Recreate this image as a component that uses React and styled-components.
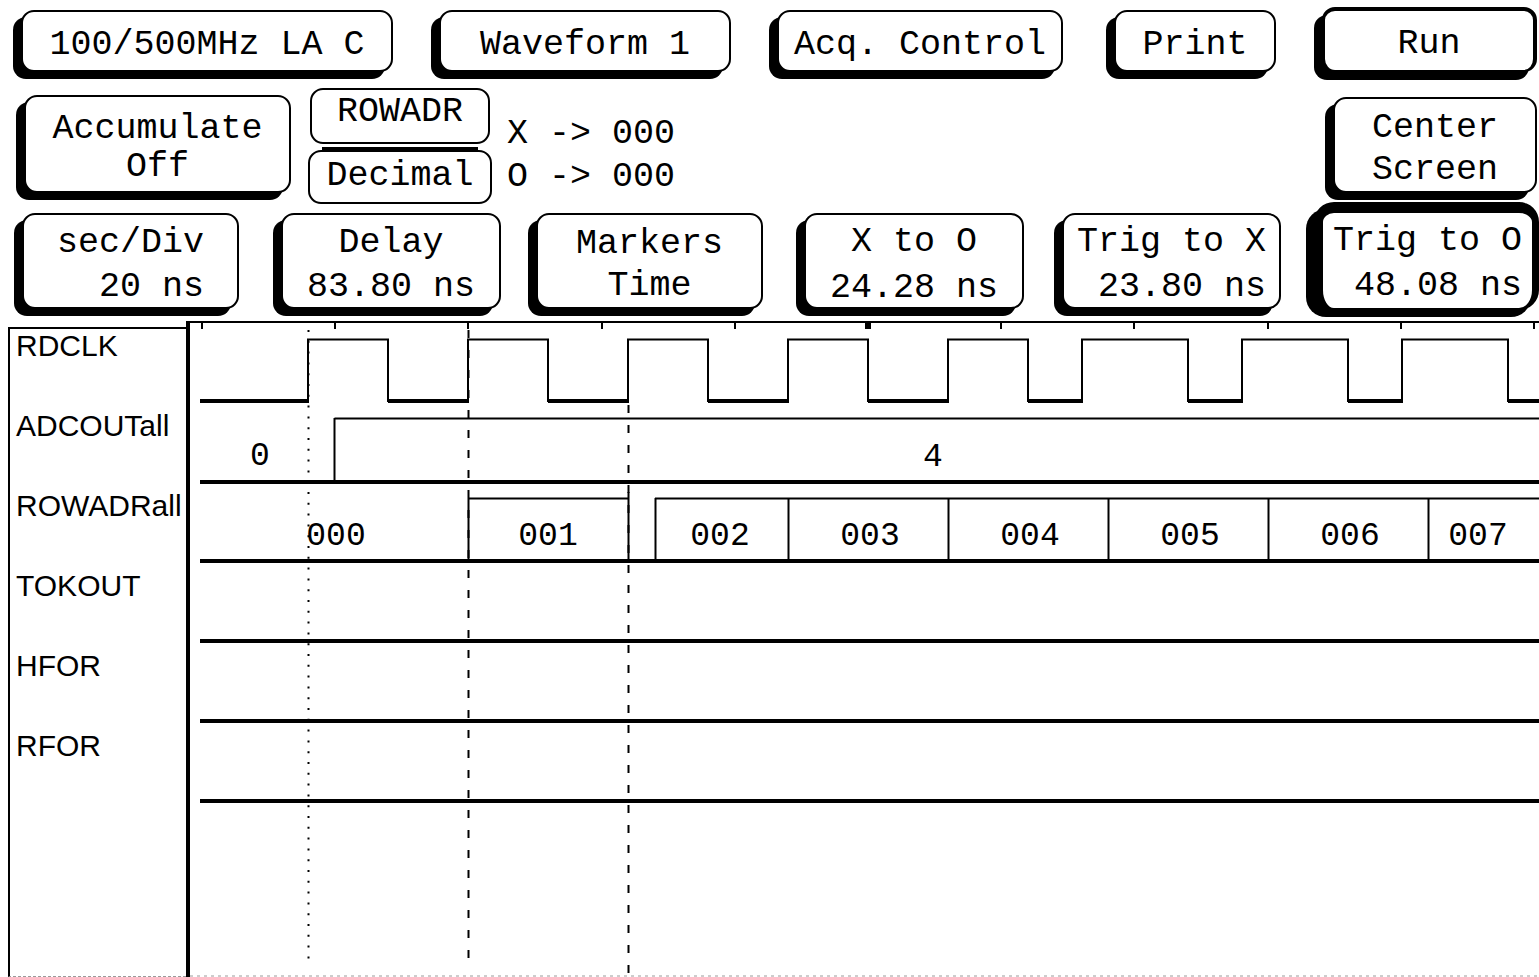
import React from "react";
import styled, { createGlobalStyle, css } from "styled-components";

const GlobalStyle = createGlobalStyle`
  html, body { margin: 0; padding: 0; background: #fff; }
  body {
    font-family: "Liberation Mono", "DejaVu Sans Mono", monospace;
    color: #000;
  }
`;

const Screen = styled.div`
  width: 1539px;
  height: 977px;
  overflow: hidden;
  background: #fff;
  display: flex;
  flex-direction: column;
`;

const Controls = styled.div`
  flex: none;
  display: flex;
  flex-direction: column;
`;

const Row = styled.div`
  flex: none;
  height: ${(p) => p.$h}px;
  display: flex;
  align-items: flex-start;
`;

const Key = styled.div`
  box-sizing: border-box;
  flex: none;
  width: ${(p) => p.$w}px;
  height: ${(p) => p.$h}px;
  margin-left: ${(p) => p.$ml ?? 0}px;
  margin-top: ${(p) => p.$mt ?? 0}px;
  padding-top: 7px;
  border: 2px solid #000;
  border-radius: 13px;
  box-shadow: -8px 7px 0 #000;
  background: #fff;
  display: flex;
  flex-direction: column;
  align-items: center;
  justify-content: center;
  font-size: 35px;
  line-height: ${(p) => p.$lh ?? 40}px;
  white-space: pre;
  ${(p) =>
    p.$heavy &&
    css`
      border-width: 4px 4px 2px 3px;
      box-shadow: -8px 8px 0 #000;
    `}
  ${(p) =>
    p.$selected &&
    css`
      border-width: 11px 7px 2px 9px;
      border-radius: 20px;
    `}
`;

const KeyLine = styled.span`
  display: block;
`;

const KeyStack = styled.div`
  flex: none;
  width: 184px;
  margin-left: 17px;
  display: flex;
  flex-direction: column;
  align-items: center;
`;

const SmallKey = styled.div`
  box-sizing: border-box;
  flex: none;
  width: ${(p) => p.$w}px;
  height: ${(p) => p.$h}px;
  border: 2px solid #000;
  border-radius: 13px;
  background: #fff;
  display: flex;
  align-items: center;
  justify-content: center;
  padding-bottom: ${(p) => p.$pb ?? 0}px;
  font-size: 35px;
  line-height: 40px;
`;

const Rule = styled.div`
  flex: none;
  width: 156px;
  height: 3px;
  margin-top: 3px;
  background: #000;
`;

const Readout = styled.div`
  flex: none;
  margin-left: 15px;
  margin-top: 25px;
  font-size: 35px;
  line-height: 43px;
  white-space: pre;
`;

const Spacer = styled.div`
  flex: 1;
`;

const Display = styled.div`
  flex: none;
  height: 656px;
  display: flex;
  align-items: stretch;
`;

const LabelPanel = styled.div`
  box-sizing: border-box;
  flex: none;
  width: 178px;
  margin-left: 8px;
  margin-top: 6px;
  border-top: 2px solid #000;
  border-left: 2px solid #000;
  border-bottom: 1px dashed #9a9a9a;
  display: flex;
  flex-direction: column;
  font-family: "Liberation Sans", Arial, sans-serif;
  font-size: 30px;
`;

const Label = styled.div`
  flex: none;
  height: 80px;
  line-height: 34px;
  padding-left: 6px;
  white-space: nowrap;
`;

const Plot = styled.div`
  flex: none;
  width: 1349px;
  border-left: 4px solid #000;
  svg {
    display: block;
  }
`;

/* ---------- waveform data ---------- */
const X0 = 200;
const X1 = 1539;
const HIGH = 339.5;
const LOW = 401;
const clockEdges = [308, 388, 468, 548, 628, 708, 788, 868, 948, 1028, 1082, 1188, 1242, 1348, 1402, 1508];

function clockPath() {
  let d = `M${X0} ${LOW}`;
  let low = true;
  clockEdges.forEach((x) => {
    d += ` H${x} V${low ? HIGH : LOW}`;
    low = !low;
  });
  d += ` H${X1}`;
  return d;
}

function lowSegments() {
  const pts = [X0, ...clockEdges, X1];
  const segs = [];
  for (let i = 0; i < pts.length - 1; i += 2) segs.push([pts[i], pts[i + 1]]);
  return segs;
}

const ticks = Array.from({ length: 11 }, (_, i) => Math.round(202 + i * 133.2));
const rowBoundaries = [468, 628, 655, 788, 948, 1108, 1268, 1428];
const rowValues = [
  ["000", 336],
  ["001", 548],
  ["002", 720],
  ["003", 870],
  ["004", 1030],
  ["005", 1190],
  ["006", 1350],
  ["007", 1478],
];
const flatLines = [641, 721, 801];

const valueText = {
  fontFamily: '"Liberation Mono", "DejaVu Sans Mono", monospace',
  fontSize: 33,
  textAnchor: "middle",
  fill: "#000",
};

function Waveforms() {
  return (
    <svg width="1349" height="656" viewBox="190 321 1349 656">
      {/* cursors */}
      <line x1="308.5" y1="330" x2="308.5" y2="964" stroke="#000" strokeWidth="2" strokeDasharray="2 8.8" />
      <line x1="468.5" y1="330" x2="468.5" y2="964" stroke="#000" strokeWidth="2" strokeDasharray="8 12" />
      <line x1="628.5" y1="405" x2="628.5" y2="976" stroke="#000" strokeWidth="2" strokeDasharray="8 12" />

      {/* top graticule */}
      <line x1="190" y1="322" x2={X1} y2="322" stroke="#000" strokeWidth="2" />
      {ticks.map((x) => (
        <line key={x} x1={x} y1="321" x2={x} y2="329" stroke="#000" strokeWidth="2" />
      ))}
      <rect x="865" y="321" width="6" height="8" fill="#000" />

      {/* RDCLK */}
      <path d={clockPath()} fill="none" stroke="#000" strokeWidth="2" />
      {lowSegments().map(([a, b]) => (
        <line key={a} x1={a} y1={LOW} x2={b + 1} y2={LOW} stroke="#000" strokeWidth="4" />
      ))}

      {/* ADCOUTall */}
      <line x1="334.5" y1="418.5" x2={X1} y2="418.5" stroke="#000" strokeWidth="2" />
      <line x1="334.5" y1="418" x2="334.5" y2="482" stroke="#000" strokeWidth="2" />
      <line x1={X0} y1="482" x2={X1} y2="482" stroke="#000" strokeWidth="4" />
      <text x="260" y="465" style={valueText}>0</text>
      <text x="933" y="466" style={valueText}>4</text>

      {/* ROWADRall */}
      <line x1="468" y1="498.5" x2="629" y2="498.5" stroke="#000" strokeWidth="2" />
      <line x1="655" y1="498.5" x2={X1} y2="498.5" stroke="#000" strokeWidth="2" />
      {rowBoundaries.map((x) => (
        <line key={x} x1={x + 0.5} y1={x === 628 ? 492 : 498} x2={x + 0.5} y2="561" stroke="#000" strokeWidth="2" />
      ))}
      <line x1={X0} y1="561" x2={X1} y2="561" stroke="#000" strokeWidth="4" />
      {rowValues.map(([v, x]) => (
        <text key={v} x={x} y="545" style={valueText}>
          {v}
        </text>
      ))}

      {/* TOKOUT / HFOR / RFOR */}
      {flatLines.map((y) => (
        <line key={y} x1={X0} y1={y} x2={X1} y2={y} stroke="#000" strokeWidth="4" />
      ))}

      {/* bottom edge */}
      <line x1="190" y1="976" x2={X1} y2="976" stroke="#9a9a9a" strokeWidth="1" strokeDasharray="3 4" />
    </svg>
  );
}

function TwoLine({ a, b }) {
  return (
    <>
      <KeyLine>{a}</KeyLine>
      <KeyLine>{b}</KeyLine>
    </>
  );
}

export default function App() {
  return (
    <>
      <GlobalStyle />
      <Screen>
        <Controls>
          <Row $h={88}>
            <Key $w={372} $h={62} $ml={21} $mt={10}>100/500MHz LA C</Key>
            <Key $w={292} $h={62} $ml={46} $mt={10}>Waveform 1</Key>
            <Key $w={286} $h={62} $ml={46} $mt={10}>Acq. Control</Key>
            <Key $w={162} $h={62} $ml={51} $mt={10}>Print</Key>
            <Key $w={215} $h={65} $ml={46} $mt={7} $heavy>Run</Key>
          </Row>

          <Row $h={114}>
            <Key $w={267} $h={98} $ml={24} $mt={95 - 88} $lh={38}>
              <TwoLine a="Accumulate" b="Off" />
            </Key>
            <KeyStack>
              <SmallKey $w={180} $h={56} $pb={8}>ROWADR</SmallKey>
              <Rule />
              <SmallKey $w={184} $h={54} $pb={2}>Decimal</SmallKey>
            </KeyStack>
            <Readout>{"X -> 000\nO -> 000"}</Readout>
            <Spacer />
            <Key $w={204} $h={96} $mt={97 - 88} $lh={42} style={{ marginRight: 2 }}>
              <TwoLine a="Center" b="Screen" />
            </Key>
          </Row>

          <Row $h={119}>
            <Key $w={217} $h={96} $ml={22} $mt={11} $lh={44}>
              <TwoLine a="sec/Div" b="  20 ns" />
            </Key>
            <Key $w={220} $h={96} $ml={42} $mt={11} $lh={44}>
              <TwoLine a="Delay" b="83.80 ns" />
            </Key>
            <Key $w={227} $h={96} $ml={35} $mt={11} $lh={42}>
              <TwoLine a="Markers" b="Time" />
            </Key>
            <Key $w={220} $h={96} $ml={41} $mt={11} $lh={46}>
              <TwoLine a="X to O" b="24.28 ns" />
            </Key>
            <Key $w={219} $h={96} $ml={38} $mt={11} $lh={45}>
              <TwoLine a="Trig to X" b=" 23.80 ns" />
            </Key>
            <Key $w={225} $h={108} $ml={33} $mt={0} $lh={45} $selected>
              <TwoLine a="Trig to O" b=" 48.08 ns" />
            </Key>
          </Row>
        </Controls>

        <Display>
          <LabelPanel>
            <Label>RDCLK</Label>
            <Label>ADCOUTall</Label>
            <Label>ROWADRall</Label>
            <Label>TOKOUT</Label>
            <Label>HFOR</Label>
            <Label>RFOR</Label>
          </LabelPanel>
          <Plot>
            <Waveforms />
          </Plot>
        </Display>
      </Screen>
    </>
  );
}
